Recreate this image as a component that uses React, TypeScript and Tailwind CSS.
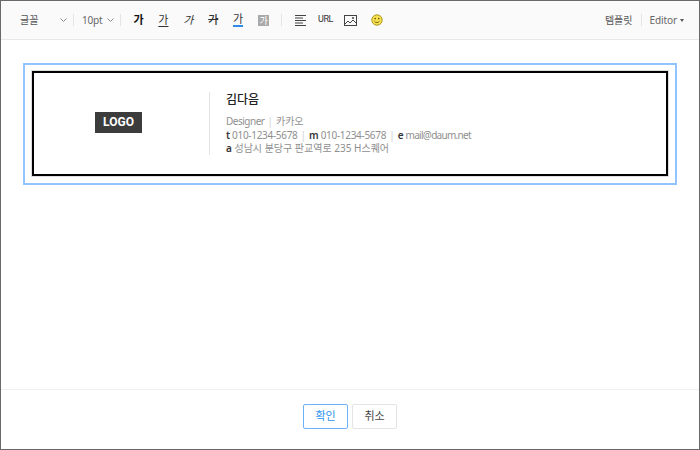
import React from "react";

const Sep = () => <span className="block w-px h-[12px] bg-[#e4e4e4]" />;
const Chevron = ({ className }: { className: string }) => (
  <svg width="7" height="4" viewBox="0 0 7 4" className={className} fill="none" stroke="#8a8a8a" strokeWidth="1">
    <path d="M0.5 0.5L3.5 3.5L6.5 0.5" />
  </svg>
);
const Div = () => <span className="text-[#d0d0d0] mx-[3px] text-[10px] tracking-normal">|</span>;

export default function App() {
  return (
    <div
      className="w-[700px] h-[450px] bg-white flex flex-col border border-[#696969] text-[#333]"
      style={{ fontFamily: '"Noto Sans", "Noto Sans CJK KR", sans-serif' }}
    >
      <div className="h-[39px] shrink-0 bg-[#fafafa] border-b border-[#e8e8e8] flex items-center text-[10px] text-[#555]">
        <span className="ml-[19px] w-[40px]">글꼴</span>
        <Chevron className="ml-0" />
        <span className="ml-[6px] flex"><Sep /></span>
        <span className="ml-[8px] text-[10px] text-[#666] tracking-[-0.2px]">10pt</span>
        <Chevron className="ml-[5px]" />
        <span className="ml-[6px] flex"><Sep /></span>
        <div className="ml-[12px] flex items-center gap-[14.8px] text-[11px] text-[#333]">
          <span className="font-bold text-[#111]">가</span>
          <span className="underline underline-offset-2">가</span>
          <span className="italic">가</span>
          <span className="line-through font-medium">가</span>
          <span className="border-b-2 border-[#2e8be6] leading-[12px] h-[14px]">가</span>
          <span className="bg-[#a9a9a9] text-white text-[9px] leading-[11px] w-[11px] h-[11px] text-center">가</span>
        </div>
        <span className="ml-[12px] flex"><Sep /></span>
        <svg width="11" height="11" viewBox="0 0 11 11" className="ml-[13px]" stroke="#444" strokeWidth="1">
          <path d="M0 0.5H11M0 3H8M0 5.5H11M0 8H8M0 10.5H11" />
        </svg>
        <span className="ml-[12px] text-[9px] text-[#333] tracking-[-0.4px]" style={{ fontFamily: "Roboto, sans-serif" }}>URL</span>
        <svg width="13" height="11" viewBox="0 0 13 11" className="ml-[11px]" fill="none" stroke="#444" strokeWidth="1">
          <rect x="0.5" y="0.5" width="12" height="10" />
          <path d="M1 9L4 6L6 8L9 5L12 8" />
          <circle cx="9" cy="3" r="1" fill="#444" stroke="none" />
        </svg>
        <svg width="12" height="12" viewBox="0 0 12 12" className="ml-[14px]">
          <circle cx="6" cy="6" r="5.2" fill="#f7e04b" stroke="#a89a2a" strokeWidth="1" />
          <circle cx="4.2" cy="4.6" r="0.8" fill="#5a5210" />
          <circle cx="7.8" cy="4.6" r="0.8" fill="#5a5210" />
          <path d="M3.4 7.2C4.4 9 7.6 9 8.6 7.2" fill="none" stroke="#5a5210" strokeWidth="0.8" />
        </svg>
        <span className="ml-auto text-[10px] text-[#555]">템플릿</span>
        <span className="ml-[8px] flex"><Sep /></span>
        <span className="ml-[8px] text-[10px] text-[#666] tracking-[-0.1px]">Editor</span>
        <span className="ml-[3px] mr-[15px] w-0 h-0 border-x-[2.5px] border-x-transparent border-t-[3px] border-t-[#555]" />
      </div>

      <div className="flex-1 px-[22px] pt-[23px]">
        <div className="h-[122px] border-2 border-[#92c4ff] px-[7px] pt-[6px]">
          <div className="h-[105px] border-2 border-black shadow-[0_0_0_1px_#dddddd] flex items-center">
            <div className="w-[175px] shrink-0 flex pl-[61px] pb-[3px]">
              <span className="w-[47px] h-[21px] bg-[#3c3c3c] text-white text-[12px] font-bold flex items-center justify-center" style={{ fontFamily: "Roboto, sans-serif" }}>LOGO</span>
            </div>
            <div className="h-[63px] border-l border-[#e2e2e2] pl-[16px] flex flex-col">
              <div className="text-[12px] font-medium leading-[16px] text-[#222]">김다음</div>
              <div className="mt-[7px] text-[10px] leading-[13.5px] text-[#8f8f8f] whitespace-nowrap">
                <div><span className="tracking-[-0.5px]">Designer</span><Div />카카오</div>
                <div className="tracking-[-0.3px]">
                  <b className="font-semibold text-[#333]">t</b> 010-1234-5678<Div />
                  <b className="font-semibold text-[#333]">m</b> 010-1234-5678<Div />
                  <b className="font-semibold text-[#333]">e</b> <span className="tracking-[-0.7px]">mail@daum.net</span>
                </div>
                <div><b className="font-semibold text-[#333]">a</b> 성남시 분당구 판교역로 235 H스퀘어</div>
              </div>
            </div>
          </div>
        </div>
      </div>

      <div className="h-[60px] shrink-0 border-t border-[#f0f0f0] flex justify-center gap-[4px] pt-[14px]">
        <button className="w-[45px] h-[25px] rounded-[2px] border border-[#6fb1f7] text-[#2e93ee] text-[11px] flex items-center justify-center">확인</button>
        <button className="w-[45px] h-[25px] rounded-[2px] border border-[#e4e4e4] text-[#444] text-[11px] flex items-center justify-center">취소</button>
      </div>
    </div>
  );
}
